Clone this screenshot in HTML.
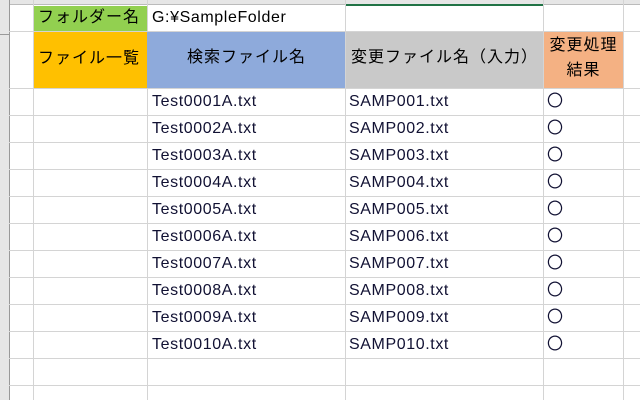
<!DOCTYPE html>
<html><head><meta charset="utf-8"><style>
body{margin:0;width:640px;height:400px;overflow:hidden;background:#fff;position:relative;font-family:"Liberation Sans","Noto Sans CJK JP",sans-serif;font-size:16px;color:#000}
div{position:absolute;box-sizing:border-box}
.h{height:1px;background:#d4d4d4;left:9px;width:631px}
.v{width:1px;background:#d4d4d4;top:0;height:400px}
.t{white-space:nowrap;line-height:27px;color:#111133;letter-spacing:0.6px}
.j{letter-spacing:1px}
</style></head><body>
<div style="left:0;top:0;width:640px;height:5px;background:#e6e6e6;border-bottom:1px solid #bbb"></div>
<div style="left:0;top:0;width:10px;height:400px;background:#e6e6e6;border-right:1px solid #999"></div>
<div style="left:345px;top:4px;width:198px;height:2px;background:#217346"></div>
<div class="v" style="left:33px"></div>
<div class="v" style="left:147px"></div>
<div class="v" style="left:345px"></div>
<div class="v" style="left:543px"></div>
<div class="v" style="left:623px"></div>
<div class="h" style="top:31px"></div>
<div class="h" style="top:88px"></div>
<div class="h" style="top:115px"></div><div class="h" style="top:142px"></div><div class="h" style="top:169px"></div><div class="h" style="top:196px"></div><div class="h" style="top:223px"></div><div class="h" style="top:250px"></div><div class="h" style="top:277px"></div><div class="h" style="top:304px"></div><div class="h" style="top:331px"></div><div class="h" style="top:358px"></div><div class="h" style="top:385px"></div>
<div style="left:0;top:34px;width:10px;height:1px;background:#999"></div>
<div class="j" style="left:34px;top:6px;width:113px;height:25px;background:#92d050;line-height:24px;padding-left:4px">フォルダー名</div>
<div style="left:152px;top:6px;height:25px;line-height:24px;white-space:nowrap;letter-spacing:0.6px">G:¥SampleFolder</div>
<div class="j" style="left:34px;top:32px;width:113px;height:56px;background:#ffc000;line-height:54px;padding-left:4px">ファイル一覧</div>
<div class="j" style="left:147px;top:32px;width:198px;height:56px;background:#8eaadb;line-height:52px;padding-left:40px">検索ファイル名</div>
<div class="j" style="left:346px;top:32px;width:197px;height:56px;background:#c9c9c9;line-height:52px;padding-left:5px">変更ファイル名（入力）</div>
<div class="j" style="left:544px;top:32px;width:79px;height:56px;background:#f4b183;line-height:25px;text-align:center;padding-top:1px">変更処理<br>結果</div>
<div class="t" style="left:152px;top:88px">Test0001A.txt</div><div class="t" style="left:349px;top:88px">SAMP001.txt</div><div class="t" style="left:547px;top:88px">〇</div>
<div class="t" style="left:152px;top:115px">Test0002A.txt</div><div class="t" style="left:349px;top:115px">SAMP002.txt</div><div class="t" style="left:547px;top:115px">〇</div>
<div class="t" style="left:152px;top:142px">Test0003A.txt</div><div class="t" style="left:349px;top:142px">SAMP003.txt</div><div class="t" style="left:547px;top:142px">〇</div>
<div class="t" style="left:152px;top:169px">Test0004A.txt</div><div class="t" style="left:349px;top:169px">SAMP004.txt</div><div class="t" style="left:547px;top:169px">〇</div>
<div class="t" style="left:152px;top:196px">Test0005A.txt</div><div class="t" style="left:349px;top:196px">SAMP005.txt</div><div class="t" style="left:547px;top:196px">〇</div>
<div class="t" style="left:152px;top:223px">Test0006A.txt</div><div class="t" style="left:349px;top:223px">SAMP006.txt</div><div class="t" style="left:547px;top:223px">〇</div>
<div class="t" style="left:152px;top:250px">Test0007A.txt</div><div class="t" style="left:349px;top:250px">SAMP007.txt</div><div class="t" style="left:547px;top:250px">〇</div>
<div class="t" style="left:152px;top:277px">Test0008A.txt</div><div class="t" style="left:349px;top:277px">SAMP008.txt</div><div class="t" style="left:547px;top:277px">〇</div>
<div class="t" style="left:152px;top:304px">Test0009A.txt</div><div class="t" style="left:349px;top:304px">SAMP009.txt</div><div class="t" style="left:547px;top:304px">〇</div>
<div class="t" style="left:152px;top:331px">Test0010A.txt</div><div class="t" style="left:349px;top:331px">SAMP010.txt</div><div class="t" style="left:547px;top:331px">〇</div>
</body></html>
